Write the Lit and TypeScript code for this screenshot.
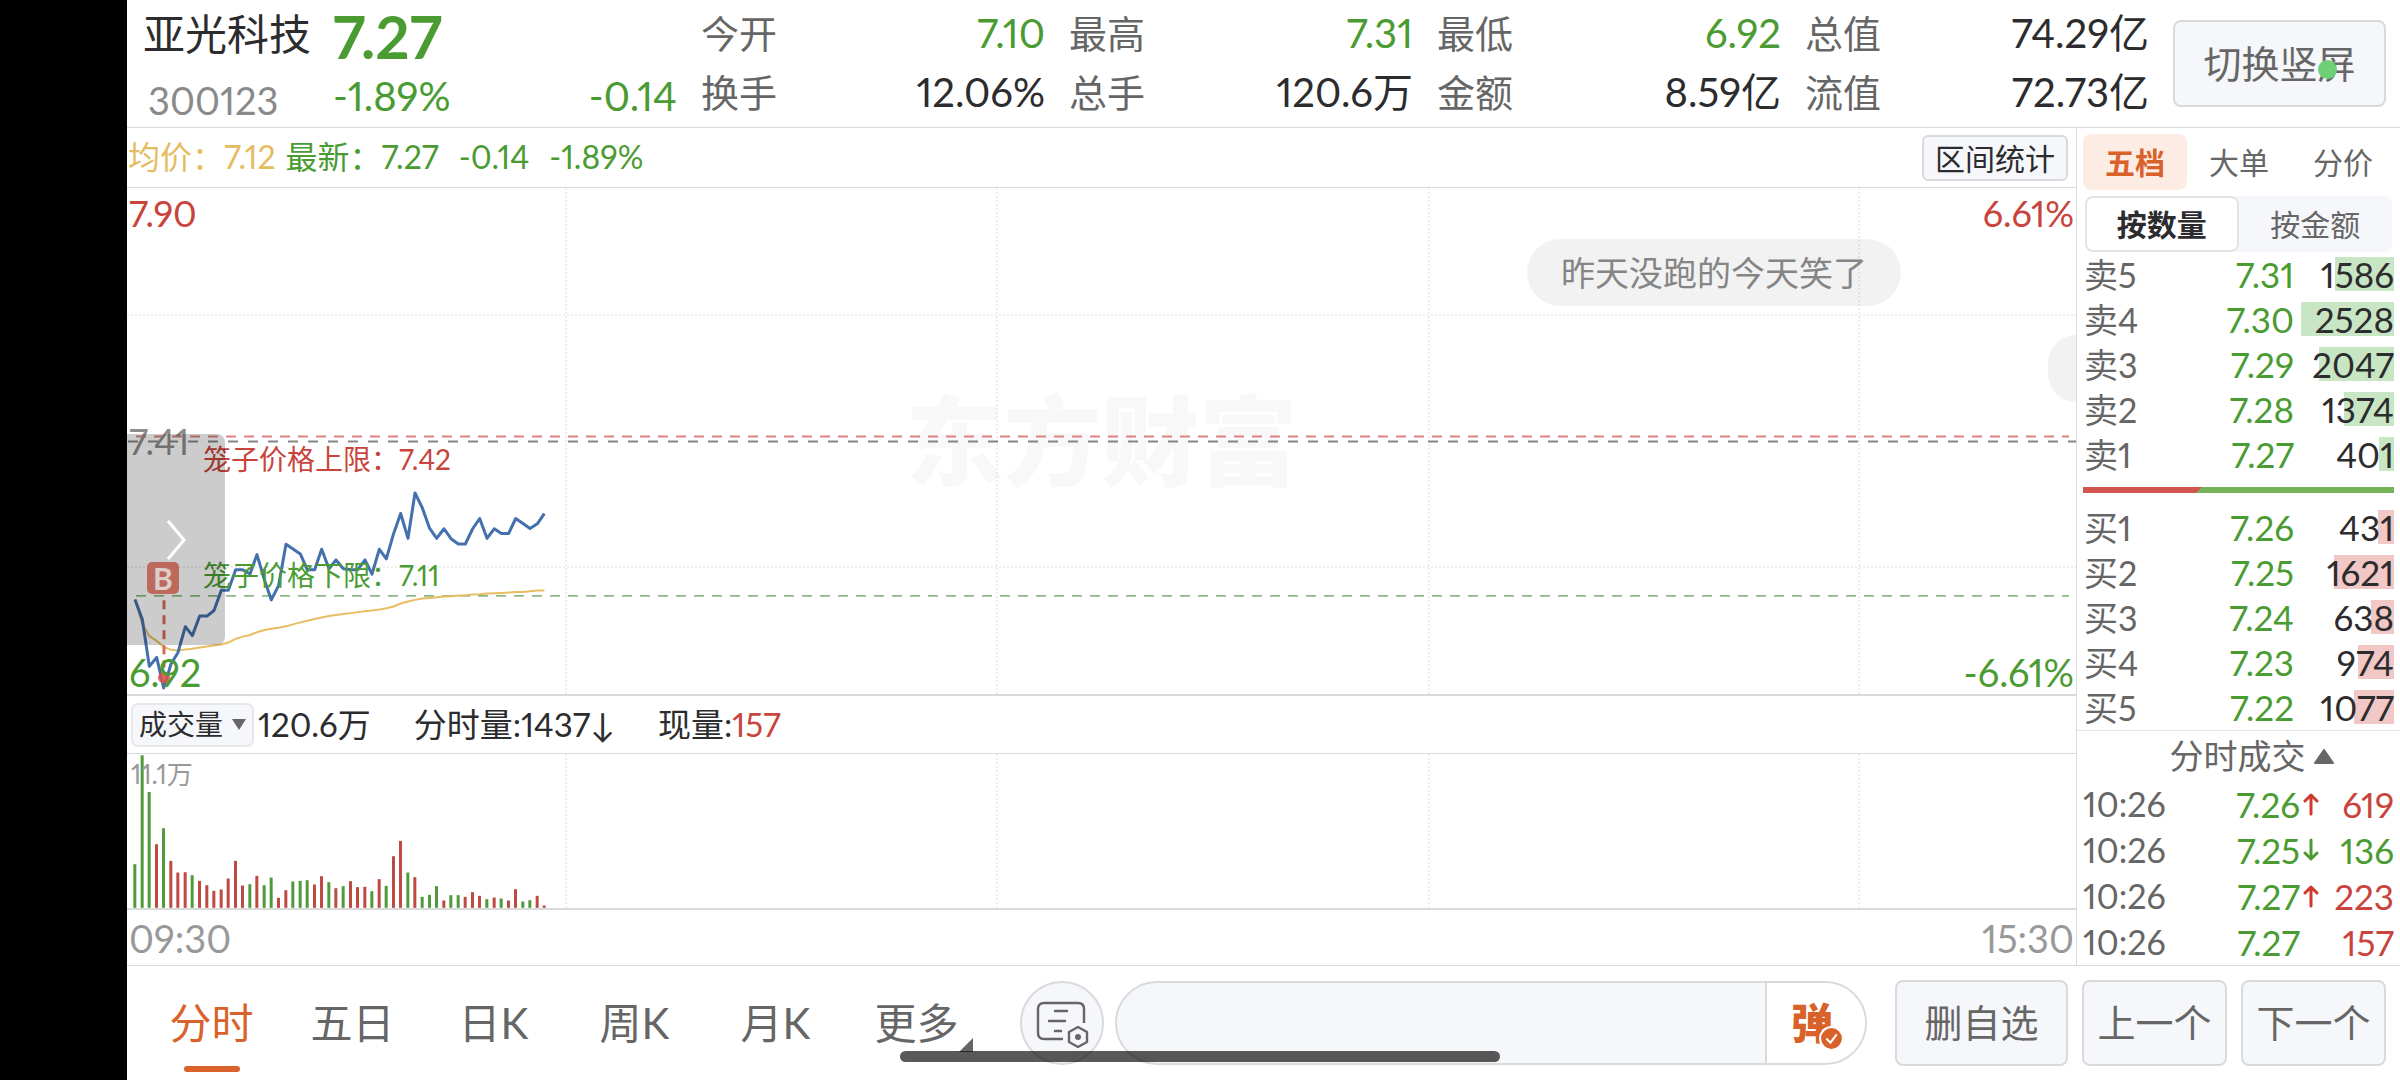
import { LitElement, html, svg, css } from "lit";
import { customElement, state } from "lit/decorators.js";
import { classMap } from "lit/directives/class-map.js";

type Tone = "up" | "down";

interface Stat { label: string; value: string; tone?: Tone; }
interface Level { name: string; price: string; volume: number; }
interface Trade { time: string; price: string; move?: Tone; volume: number; tone: Tone; }

const STATS: Stat[] = [
  { label: "今开", value: "7.10", tone: "down" },
  { label: "最高", value: "7.31", tone: "down" },
  { label: "最低", value: "6.92", tone: "down" },
  { label: "总值", value: "74.29亿" },
  { label: "换手", value: "12.06%" },
  { label: "总手", value: "120.6万" },
  { label: "金额", value: "8.59亿" },
  { label: "流值", value: "72.73亿" },
];

const SELLS: Level[] = [
  { name: "卖5", price: "7.31", volume: 1586 },
  { name: "卖4", price: "7.30", volume: 2528 },
  { name: "卖3", price: "7.29", volume: 2047 },
  { name: "卖2", price: "7.28", volume: 1374 },
  { name: "卖1", price: "7.27", volume: 401 },
];

const BUYS: Level[] = [
  { name: "买1", price: "7.26", volume: 431 },
  { name: "买2", price: "7.25", volume: 1621 },
  { name: "买3", price: "7.24", volume: 638 },
  { name: "买4", price: "7.23", volume: 974 },
  { name: "买5", price: "7.22", volume: 1077 },
];

const MAX_LEVEL = Math.max(...SELLS.concat(BUYS).map((l) => l.volume));

const TRADES: Trade[] = [
  { time: "10:26", price: "7.26", move: "up", volume: 619, tone: "up" },
  { time: "10:26", price: "7.25", move: "down", volume: 136, tone: "down" },
  { time: "10:26", price: "7.27", move: "up", volume: 223, tone: "up" },
  { time: "10:26", price: "7.27", volume: 157, tone: "up" },
];

const PERIODS = ["分时", "五日", "日K", "周K", "月K", "更多"];

/* Plot space: three units per pixel of the nominal chart. */
const PLOT_W = 5847;
const PRICE_H = 1530;
const VOLUME_H = 462;
const FIRST_X = 24;
const MINUTE = 21.55;

const PRICE = [
  1244, 1304, 1446, 1419, 1511, 1439, 1404, 1326, 1353, 1294, 1294, 1277, 1216, 1216, 1154,
  1154, 1167, 1108, 1184, 1245, 1201, 1077, 1091, 1106, 1154, 1154, 1092, 1151, 1124, 1151,
  1154, 1154, 1124, 1167, 1092, 1121, 1044, 984, 1059, 922, 967, 1029, 1059, 1030, 1060,
  1076, 1076, 1030, 999, 1059, 1030, 1044, 1044, 999, 1014, 1029, 1015, 984,
];

const AVERAGE = [
  1244, 1319, 1354, 1369, 1387, 1396, 1398, 1395, 1393, 1389, 1386, 1383, 1380, 1374, 1363,
  1356, 1351, 1343, 1336, 1332, 1329, 1325, 1319, 1313, 1308, 1303, 1298, 1294, 1291, 1288,
  1285, 1282, 1279, 1277, 1274, 1270, 1265, 1256, 1250, 1245, 1241, 1239, 1237, 1235, 1234,
  1232, 1231, 1229, 1228, 1226, 1225, 1224, 1223, 1221, 1221, 1219, 1217, 1217,
];

const VOLUME = [
  131, 458, 348, 191, 239, 141, 106, 107, 98, 81, 68, 51, 55, 88, 141, 67, 71, 96, 68, 91,
  30, 53, 79, 81, 83, 70, 95, 77, 59, 65, 80, 62, 63, 50, 86, 66, 155, 201, 106, 92, 33,
  39, 65, 22, 38, 38, 33, 47, 36, 26, 31, 28, 22, 56, 19, 23, 36, 7,
];
const VOLUME_TONE = "gggrgrrrgrrrrrrrgrggrrgggrrgrgrrrgrgrrgrgggrggrrrgrgrrggrr";

const DIVISIONS = [1317, 2610, 3906, 5196];

const polyline = (ys: number[]) =>
  ys.map((y, i) => `${(FIRST_X + i * MINUTE).toFixed(0)},${y}`).join(" ");

@customElement("app-root")
export class AppRoot extends LitElement {
  @state() private period = 0;
  @state() private bookTab = 0;
  @state() private byAmount = false;

  static styles = css`
    :host {
      --up: #c8443c;
      --down: #4b9b33;
      --ink: #2c2c2e;
      --mute: #666;
      --faint: #999;
      --line: #d9dadc;
      --fill: #f6f7fa;
      --accent: #d9622b;
      display: flex;
      min-height: 100vh;
      box-sizing: border-box;
      padding-left: 127px;
      background: #000;
      color: var(--ink);
      font-family: Lato, "Noto Sans CJK SC", sans-serif;
      font-size: 32px;
      line-height: 1.2;
      font-variant-numeric: proportional-nums;
      white-space: nowrap;
    }
    *, *::before, *::after { box-sizing: border-box; }
    button, input, select { font: inherit; color: inherit; margin: 0; padding: 0; border: 0; background: none; }
    table { border-collapse: collapse; width: 100%; }
    td, th { padding: 0; font-weight: 400; text-align: left; }
    h1, h2, p, dl, dd, dt { margin: 0; font-weight: 400; font-size: inherit; }
    .up { color: var(--up); }
    .down { color: var(--down); }

    .page { flex: 1; min-width: 0; display: flex; flex-direction: column; background: #fff; position: relative; }

    .header { display: flex; align-items: flex-start; height: 128px; padding-left: 16px; padding-right: 14px; border-bottom: 1px solid var(--line); }
    .identity { width: 190px; display: flex; flex-direction: column; }
    .name { font-size: 42px; line-height: 68px; }
    .code { font-size: 38px; line-height: 64px; padding-left: 5px; color: #8a8a8a; }
    .quote { width: 344px; color: var(--down); }
    .last { font-size: 60px; font-weight: 700; line-height: 72px; }
    .delta { display: flex; justify-content: space-between; font-size: 40px; line-height: 48px; }
    .stats { flex: 1; display: grid; grid-template-columns: repeat(4, 1fr); gap: 0 24px; padding: 4px 24px 0; }
    .stat { display: flex; justify-content: space-between; line-height: 59px; }
    .stat-label { font-size: 38px; color: var(--mute); }
    .stat-value { font-size: 40px; }
    .rotate { position: relative; width: 213px; height: 87px; margin-top: 20px; border: 2px solid var(--line); border-radius: 8px; background: var(--fill); color: var(--mute); font-size: 38px; }
    .dot { position: absolute; left: 143px; top: 38px; width: 19px; height: 19px; border-radius: 50%; background: #6fcf74; }

    .body { flex: 1; display: flex; min-height: 0; }
    .charts { flex: 1; min-width: 0; display: flex; flex-direction: column; }
    .summary { display: flex; align-items: center; height: 59px; padding: 0 8px 0 1px; gap: 10px; }
    .average { color: #e6bc62; }
    .latest { display: flex; gap: 20px; color: var(--down); flex: 1; }
    .range { height: 46px; width: 146px; border: 2px solid var(--line); border-radius: 6px; background: var(--fill); font-size: 30px; }

    .plot { position: relative; border: solid var(--line); border-width: 1px 0 2px; }
    .price-plot { flex: 510; }
    .volume-plot { flex: 155; }
    .plot svg { position: absolute; inset: 0; width: 100%; height: 100%; display: block; }
    .grid { stroke: #dcdcdc; stroke-width: 1; stroke-dasharray: 2 2; fill: none; }
    .limit-up { stroke: #d9837e; stroke-width: 2; stroke-dasharray: 10 8; }
    .limit-down { stroke: #38852b; stroke-width: 1; stroke-dasharray: 10 8; }
    .prev { stroke: #858585; stroke-width: 2; stroke-dasharray: 10 10; }
    .price { stroke: #4470ad; stroke-width: 3; fill: none; stroke-linejoin: round; }
    .avg { stroke: #e8bd62; stroke-width: 2; fill: none; }
    .mark-line { stroke: #d9685c; stroke-width: 3; stroke-dasharray: 9 6; }
    .bar-r { fill: #be4a43; }
    .bar-g { fill: #519a3b; }

    .watermark { position: absolute; left: 6%; right: 6%; top: 50%; margin-top: -60px; text-align: center; font-size: 98px; font-weight: 900; color: #f8f8f8; line-height: 118px; }
    .tag { position: absolute; font-size: 36px; line-height: 44px; }
    .high { left: 2px; top: 3px; }
    .low { left: 2px; bottom: 0; font-size: 38px; }
    .high-pct { right: 2px; top: 3px; }
    .low-pct { right: 2px; bottom: 0; font-size: 38px; }
    .close { left: 2px; top: 50%; margin-top: -22px; color: #8c8c8c; }
    .cage { font-size: 28px; line-height: 34px; left: 76px; }
    .cage-top { top: 50%; margin-top: 1px; }
    .cage-bottom { top: 73%; }
    .peak { left: 4px; top: 3px; font-size: 26px; line-height: 34px; color: var(--faint); }
    .drawer { position: absolute; left: 0; top: 48.6%; width: 98px; height: 211px; border-radius: 0 8px 8px 0; background: rgba(0, 0, 0, 0.2); }
    .drawer svg { position: absolute; inset: 0; width: 98px; height: 211px; }
    .buy-mark { position: absolute; left: 20px; top: 73.9%; width: 32px; height: 32px; border-radius: 5px; background: #bd695b; color: #dccfcb; font-size: 30px; font-weight: 700; line-height: 32px; text-align: center; }
    .bullet { position: absolute; right: 175px; top: 51px; height: 67px; padding: 0 34px; border-radius: 34px; background: rgba(0, 0, 0, 0.05); color: #858585; font-size: 34px; line-height: 67px; }
    .bullet-clip { position: absolute; right: 0; top: 147px; width: 28px; height: 67px; border-radius: 34px 0 0 34px; background: #f2f2f2; }

    .volume-bar { display: flex; align-items: center; height: 57px; padding-left: 4px; font-size: 33px; }
    .indicator { position: relative; width: 123px; height: 44px; margin-right: 4px; }
    .indicator select { appearance: none; width: 100%; height: 100%; padding-left: 6px; border: 2px solid #e6e7ea; border-radius: 7px; background: var(--fill); font-size: 28px; }
    .indicator svg { position: absolute; right: 8px; top: 16px; width: 14px; height: 11px; pointer-events: none; }
    .volume-bar p + p { margin-left: 43px; }
    .axis { display: flex; justify-content: space-between; height: 55px; padding: 0 2px; color: var(--faint); font-size: 38px; line-height: 56px; }

    .side { width: 324px; border-left: 1px solid var(--line); padding: 6px 6px 0; display: flex; flex-direction: column; }
    .tabs { display: grid; grid-template-columns: repeat(3, 104px); height: 56px; }
    .tab { color: var(--mute); font-size: 30px; border-radius: 8px; }
    .tab.on { background: #fcece4; color: var(--accent); font-weight: 700; }
    .segment { display: grid; grid-template-columns: 1fr 1fr; height: 56px; margin: 6px 2px 0; border-radius: 8px; background: var(--fill); }
    .seg { font-size: 30px; color: var(--mute); border-radius: 8px; }
    .seg.on { background: #fff; border: 2px solid #e4e4e6; color: var(--ink); font-weight: 700; }
    .level { height: 45px; line-height: 45px; font-size: 35px; }
    .level-name { width: 90px; padding-left: 1px; font-size: 34px; color: var(--mute); }
    .level-price { text-align: right; padding-right: 7px; color: var(--down); }
    .level-volume { position: relative; width: 93px; text-align: right; }
    .depth { position: absolute; right: 0; top: 5px; height: 34px; }
    .depth-sell { background: #c8e6c3; }
    .depth-buy { background: #f1c8c6; }
    .amount { position: relative; }
    .ratio { display: block; width: 100%; height: 6px; margin: 10px 0 12px; }
    .trades-head { height: 51px; margin: 0 -6px; padding-left: 26px; border-top: 1px solid #e4e4e6; display: flex; align-items: center; justify-content: center; gap: 8px; font-size: 34px; color: var(--mute); }
    .trades-head svg { width: 20px; height: 15px; flex: none; }
    .trades { flex: 1; }
    .trade { font-size: 35px; }
    .trade-time { color: var(--mute); font-size: 34px; }
    .trade-price { text-align: right; color: var(--down); }
    .trade-move { width: 22px; }
    .trade-move svg { display: block; width: 16px; height: 24px; margin-left: 3px; }
    .trade-volume { width: 72px; text-align: right; }

    .footer { display: flex; align-items: center; height: 115px; border-top: 1px solid var(--line); padding: 0 14px; }
    .periods { display: flex; align-self: stretch; }
    .period { position: relative; width: 141px; font-size: 42px; color: var(--mute); }
    .period.on { color: var(--accent); }
    .period.on::after { content: ""; position: absolute; left: 43px; bottom: 8px; width: 56px; height: 6px; border-radius: 3px; background: var(--accent); }
    .corner { position: absolute; right: 14px; bottom: 28px; width: 14px; height: 14px; }
    .note { width: 84px; height: 84px; margin-left: 33px; border: 2px solid var(--line); border-radius: 50%; background: var(--fill); }
    .note svg { display: block; width: 80px; height: 80px; }
    .comment { flex: 1; display: flex; height: 84px; margin: 0 28px 0 11px; border: 2px solid var(--line); border-radius: 42px; overflow: hidden; background: var(--fill); }
    .comment input { flex: 1; min-width: 0; padding: 0 32px; outline: none; }
    .danmu { position: relative; width: 100px; border-left: 2px solid var(--line); background: #fff; color: var(--accent); font-size: 42px; font-weight: 900; text-align: left; padding-left: 24px; }
    .danmu svg { position: absolute; left: 52px; top: 43px; width: 25px; height: 25px; }
    .action { width: 145px; height: 86px; margin-left: 14px; border: 2px solid var(--line); border-radius: 8px; background: var(--fill); color: var(--mute); font-size: 38px; }
    .action.wide { width: 173px; margin-left: 0; }
    .home { position: absolute; left: 34%; width: 600px; bottom: 18px; height: 11px; border-radius: 6px; background: rgba(0, 0, 0, 0.65); pointer-events: none; }
  `;

  private renderPricePlot() {
    return html`
      <div class="plot price-plot">
        <div class="watermark">东方财富</div>
        <svg viewBox="0 0 ${PLOT_W} ${PRICE_H}" preserveAspectRatio="none" aria-hidden="true">
          ${DIVISIONS.map((x) => svg`<path class="grid" vector-effect="non-scaling-stroke" d="M${x} 0V${PRICE_H}"/>`)}
          ${[384, 1146].map((y) => svg`<path class="grid" vector-effect="non-scaling-stroke" d="M0 ${y}H${PLOT_W}"/>`)}
          <path class="limit-up" vector-effect="non-scaling-stroke" d="M27 751H5826" />
          <path class="prev" vector-effect="non-scaling-stroke" d="M3 766H5847" />
          <path class="limit-down" vector-effect="non-scaling-stroke" d="M27 1233H5826" />
          <polyline class="avg" vector-effect="non-scaling-stroke" points=${polyline(AVERAGE)} />
          <polyline class="price" vector-effect="non-scaling-stroke" points=${polyline(PRICE)} />
          <path class="mark-line" vector-effect="non-scaling-stroke" d="M111 1246V1450" />
          <circle cx="111" cy="1480" r="18" fill="#d8514a" fill-opacity="0.85" />
        </svg>
        <span class="tag high up">7.90</span>
        <span class="tag high-pct up">6.61%</span>
        <span class="tag close">7.41</span>
        <span class="tag low down">6.92</span>
        <span class="tag low-pct down">-6.61%</span>
        <span class="tag cage cage-top up">笼子价格上限：7.42</span>
        <span class="tag cage cage-bottom down">笼子价格下限：7.11</span>
        <button class="drawer" aria-label="展开">
          <svg viewBox="0 0 98 211" aria-hidden="true"><path d="M41 87L57 106L41 125" fill="none" stroke="#fff" stroke-width="3" /></svg>
        </button>
        <span class="buy-mark">B</span>
        <span class="bullet">昨天没跑的今天笑了</span>
        <span class="bullet-clip"></span>
      </div>`;
  }

  private renderVolumePlot() {
    return html`
      <div class="plot volume-plot">
        <svg viewBox="0 0 ${PLOT_W} ${VOLUME_H}" preserveAspectRatio="none" aria-hidden="true">
          ${DIVISIONS.map((x) => svg`<path class="grid" vector-effect="non-scaling-stroke" d="M${x} 0V${VOLUME_H}"/>`)}
          ${VOLUME.map((v, i) => svg`<rect class="bar-${VOLUME_TONE[i]}" x=${(FIRST_X - 5 + i * MINUTE).toFixed(0)} y=${VOLUME_H - v} width="9" height=${v}/>`)}
        </svg>
        <span class="tag peak">11.1万</span>
      </div>`;
  }

  private renderLevels(levels: Level[], side: "sell" | "buy") {
    return html`
      <table>
        <tbody>
          ${levels.map((l) => html`
            <tr class="level">
              <th class="level-name" scope="row">${l.name}</th>
              <td class="level-price">${l.price}</td>
              <td class="level-volume">
                <span class="depth depth-${side}" style="width:${Math.round((l.volume / MAX_LEVEL) * 100)}%"></span>
                <span class="amount">${l.volume}</span>
              </td>
            </tr>`)}
        </tbody>
      </table>`;
  }

  private renderSide() {
    return html`
      <aside class="side">
        <div class="tabs">
          ${["五档", "大单", "分价"].map((t, i) => html`
            <button class=${classMap({ tab: true, on: i === this.bookTab })} @click=${() => (this.bookTab = i)}>${t}</button>`)}
        </div>
        <div class="segment">
          <button class=${classMap({ seg: true, on: !this.byAmount })} @click=${() => (this.byAmount = false)}>按数量</button>
          <button class=${classMap({ seg: true, on: this.byAmount })} @click=${() => (this.byAmount = true)}>按金额</button>
        </div>
        ${this.renderLevels(SELLS, "sell")}
        <svg class="ratio" viewBox="0 0 311 6" preserveAspectRatio="none" aria-hidden="true">
          <path d="M0 0H311V6H0Z" fill="#76b45a" />
          <path d="M0 0H119L113 6H0Z" fill="#cf554e" />
        </svg>
        ${this.renderLevels(BUYS, "buy")}
        <h2 class="trades-head">分时成交
          <svg viewBox="0 0 20 15" aria-hidden="true"><path d="M10 1L19 14H1Z" fill="#666" stroke="#666" stroke-width="2" stroke-linejoin="round" /></svg>
        </h2>
        <table class="trades">
          <tbody>
            ${TRADES.map((t) => html`
              <tr class="trade">
                <td class="trade-time">${t.time}</td>
                <td class="trade-price">${t.price}</td>
                <td class="trade-move">${t.move ? html`
                  <svg viewBox="0 0 16 24" fill="none" stroke-width="3" aria-hidden="true">
                    <path stroke=${t.move === "up" ? "#cf3a2c" : "#4b9b33"} stroke-linecap="round" stroke-linejoin="round"
                      d=${t.move === "up" ? "M8 22V3M2 9L8 3L14 9" : "M8 2V21M2 15L8 21L14 15"} />
                  </svg>` : ""}</td>
                <td class="trade-volume ${t.tone}">${t.volume}</td>
              </tr>`)}
          </tbody>
        </table>
      </aside>`;
  }

  render() {
    return html`
      <main class="page">
        <header class="header">
          <div class="identity">
            <h1 class="name">亚光科技</h1>
            <span class="code">300123</span>
          </div>
          <div class="quote">
            <div class="last">7.27</div>
            <div class="delta"><span>-1.89%</span><span>-0.14</span></div>
          </div>
          <dl class="stats">
            ${STATS.map((s) => html`
              <div class="stat"><dt class="stat-label">${s.label}</dt><dd class="stat-value ${s.tone ?? ""}">${s.value}</dd></div>`)}
          </dl>
          <button class="rotate">切换竖屏<span class="dot"></span></button>
        </header>

        <div class="body">
          <section class="charts">
            <div class="summary">
              <span class="average">均价：7.12</span>
              <span class="latest"><span>最新：7.27</span><span>-0.14</span><span>-1.89%</span></span>
              <button class="range">区间统计</button>
            </div>
            ${this.renderPricePlot()}
            <div class="volume-bar">
              <div class="indicator">
                <select aria-label="指标"><option>成交量</option></select>
                <svg viewBox="0 0 14 11" aria-hidden="true"><path d="M0 0H14L7 11Z" fill="#666" /></svg>
              </div>
              <p>120.6万</p>
              <p>分时量:1437↓</p>
              <p>现量:<span class="up">157</span></p>
            </div>
            ${this.renderVolumePlot()}
            <div class="axis"><span>09:30</span><span>15:30</span></div>
          </section>
          ${this.renderSide()}
        </div>

        <footer class="footer">
          <nav class="periods">
            ${PERIODS.map((p, i) => html`
              <button class=${classMap({ period: true, on: i === this.period })} @click=${() => (this.period = i)}>
                ${p}${i === PERIODS.length - 1 ? html`<svg class="corner" viewBox="0 0 14 14" aria-hidden="true"><path d="M14 0V14H0Z" fill="#666" /></svg>` : ""}
              </button>`)}
          </nav>
          <button class="note" aria-label="笔记设置">
            <svg viewBox="0 0 80 80" fill="none" stroke="#666" stroke-width="2.4" stroke-linecap="round" aria-hidden="true">
              <path d="M62 40V26Q62 20 56 20H22Q16 20 16 26V50Q16 56 22 56H41" stroke-linecap="butt" />
              <path d="M33 28H45M27 38H43M33 48H39" />
              <path d="M56 44L65 49V59L56 64L47 59V49Z" stroke-linejoin="round" />
              <circle cx="56" cy="54" r="3" fill="#666" stroke="none" />
            </svg>
          </button>
          <div class="comment">
            <input type="text" aria-label="评论" />
            <button class="danmu" aria-label="弹幕">弹
              <svg viewBox="0 0 24 24" aria-hidden="true">
                <circle cx="12" cy="12" r="11" fill="#d9622b" stroke="#fff" stroke-width="2" />
                <path d="M7 12L11 16L17 8" fill="none" stroke="#fff" stroke-width="2" />
              </svg>
            </button>
          </div>
          <button class="action wide">删自选</button>
          <button class="action">上一个</button>
          <button class="action">下一个</button>
        </footer>
        <div class="home"></div>
      </main>`;
  }
}
